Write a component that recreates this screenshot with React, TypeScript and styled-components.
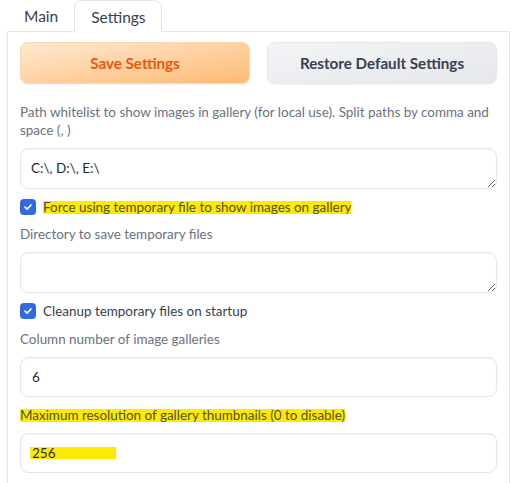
import React from "react";
import styled, { createGlobalStyle } from "styled-components";

const Global = createGlobalStyle`
  html, body { margin: 0; padding: 0; background: #fff; }
  body { font-family: Lato, "Noto Sans", sans-serif; color: #374151; }
  * { box-sizing: border-box; }
`;

const Page = styled.div`
  padding: 0 7px 0 7px;
`;

const TabBar = styled.div`
  display: flex;
  height: 31px;
  position: relative;
  z-index: 1;
`;

const Tab = styled.div<{ $active?: boolean }>`
  height: ${(p) => (p.$active ? "32px" : "31px")};
  padding: 0 ${(p) => (p.$active ? "15px" : "15px")} 0 16px;
  display: flex;
  align-items: center;
  font-size: 15.5px;
  color: #374151;
  border: 1px solid ${(p) => (p.$active ? "#e5e7eb" : "transparent")};
  border-bottom: none;
  border-radius: 8px 8px 0 0;
  background: #fff;
`;

const Panel = styled.div`
  border: 1px solid #e5e7eb;
  border-bottom: none;
  padding: 10px 12px 20px 12px;
  display: flex;
  flex-direction: column;
  gap: 8px;
  min-height: 460px;
`;

const ButtonRow = styled.div`
  display: grid;
  grid-template-columns: 1fr 1fr;
  gap: 17px;
  margin-bottom: 11px;
`;

const Button = styled.button<{ $primary?: boolean }>`
  height: 42px;
  border-radius: 8px;
  font-family: inherit;
  font-size: 15.2px;
  font-weight: 700;
  cursor: pointer;
  border: 1px solid ${(p) => (p.$primary ? "#fed7aa" : "#e5e7eb")};
  color: ${(p) => (p.$primary ? "#ea580c" : "#374151")};
  background: ${(p) =>
    p.$primary
      ? "linear-gradient(to bottom right, #ffe9d2, #fdba74)"
      : "linear-gradient(to bottom right, #f3f4f6, #e5e7eb)"};
  box-shadow: 0 1px 2px rgba(0, 0, 0, 0.05);
`;

const Block = styled.div<{ $offset?: number }>`
  display: flex;
  flex-direction: column;
  gap: 9px;
  margin-top: ${(p) => p.$offset ?? 0}px;
`;

const Label = styled.div`
  font-size: 13.45px;
  line-height: 18px;
  color: #6b7280;
`;

const Mark = styled.span`
  background: #ffe900;
  color: #4b5320;
  display: inline-block;
  line-height: 13px;
`;

const TextArea = styled.textarea`
  display: block;
  width: 100%;
  height: 41px;
  min-height: 41px;
  resize: vertical;
  border: 1px solid #e5e7eb;
  border-radius: 8px;
  padding: 10px 10px;
  font-family: inherit;
  font-size: 13.5px;
  line-height: 18px;
  color: #1f2937;
  background: #fff;
  box-shadow: inset 0 1px 2px rgba(0, 0, 0, 0.05);
  outline: none;
`;

const InputBox = styled.div`
  height: 40px;
  border: 1px solid #e5e7eb;
  border-radius: 8px;
  padding: 0 9px;
  display: flex;
  align-items: center;
  font-size: 13.5px;
  color: #1f2937;
  box-shadow: inset 0 1px 2px rgba(0, 0, 0, 0.05);
`;

const Value = styled.span<{ $marked?: boolean }>`
  padding-left: 2px;
  ${(p) =>
    p.$marked
      ? `background: #ffe900; display: inline-block; width: 86px; line-height: 12px;`
      : ""}
`;

const CheckRow = styled.label`
  display: flex;
  align-items: center;
  gap: 7px;
  height: 20px;
  font-size: 13.45px;
  color: #374151;
`;

const Box = styled.span`
  width: 16px;
  height: 16px;
  border-radius: 4px;
  background: #2f6ae6;
  display: flex;
  align-items: center;
  justify-content: center;
  flex: none;
`;

const Check = () => (
  <Box>
    <svg width="10" height="10" viewBox="0 0 10 10">
      <path d="M2 5.2 L4.1 7.2 L8 3" stroke="#fff" strokeWidth="1.8" fill="none" strokeLinecap="round" strokeLinejoin="round" />
    </svg>
  </Box>
);

export default function App() {
  return (
    <Page>
      <Global />
      <TabBar>
        <Tab>Main</Tab>
        <Tab $active>Settings</Tab>
      </TabBar>
      <Panel>
        <ButtonRow>
          <Button $primary>Save Settings</Button>
          <Button>Restore Default Settings</Button>
        </ButtonRow>
        <Block>
          <Label>Path whitelist to show images in gallery (for local use). Split paths by comma and space (, )</Label>
          <TextArea readOnly defaultValue={"C:\\, D:\\, E:\\"} />
        </Block>
        <CheckRow>
          <Check />
          <Mark>Force using temporary file to show images on gallery</Mark>
        </CheckRow>
        <Block>
          <Label>Directory to save temporary files</Label>
          <TextArea readOnly defaultValue="" />
        </Block>
        <CheckRow>
          <Check />
          <span>Cleanup temporary files on startup</span>
        </CheckRow>
        <Block $offset={1}>
          <Label>Column number of image galleries</Label>
          <InputBox><Value>6</Value></InputBox>
        </Block>
        <Block $offset={1}>
          <Label><Mark>Maximum resolution of gallery thumbnails (0 to disable)</Mark></Label>
          <InputBox><Value $marked>256</Value></InputBox>
        </Block>
      </Panel>
    </Page>
  );
}
